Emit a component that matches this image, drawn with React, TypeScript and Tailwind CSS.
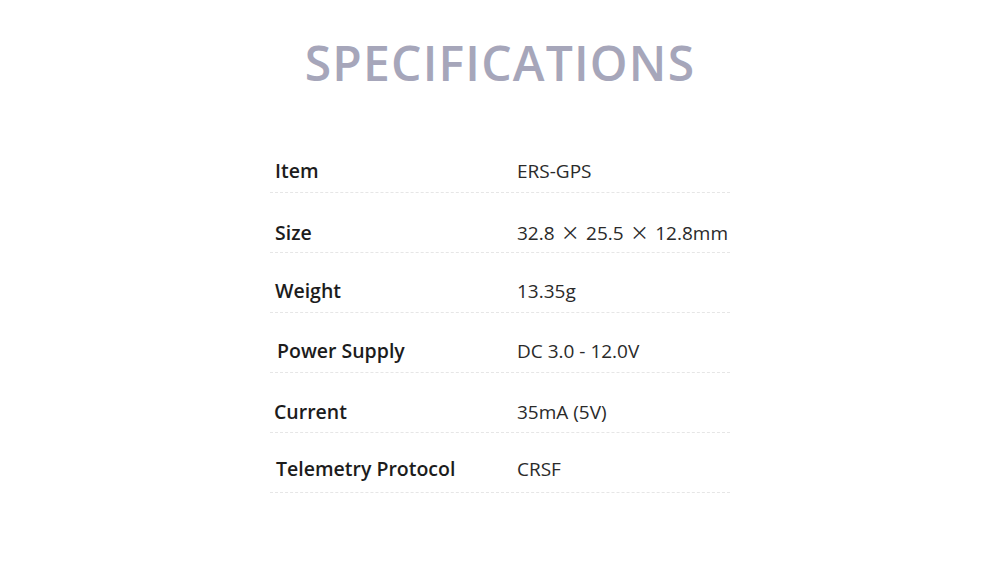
import React from "react";

const specs = [
    {label: "Item", value: ["ERS-GPS"], pl: "pl-[5px]", pb: "pb-[10px]"},
    {label: "Size", value: ["32.8", "25.5", "12.8mm"], pl: "pl-[5px]", pb: "pb-[8px]"},
    {label: "Weight", value: ["13.35g"], pl: "pl-[5px]", pb: "pb-[10px]"},
    {label: "Power Supply", value: ["DC 3.0 - 12.0V"], pl: "pl-[7px]", pb: "pb-[10px]"},
    {label: "Current", value: ["35mA (5V)"], pl: "pl-[4px]", pb: "pb-[9px]"},
    {label: "Telemetry Protocol", value: ["CRSF"], pl: "pl-[6px]", pb: "pb-[12px]"},
];

export default function App() {
    return (
        <div className="w-[1000px] h-[561px] bg-white font-['Open_Sans',sans-serif] overflow-hidden">
            <h1 className="pt-[39px] text-center text-[48px] leading-[48px] font-semibold tracking-[0.025em] text-[#a6a6ba]">
                SPECIFICATIONS
            </h1>

            <div className="w-[460px] mx-auto mt-[46px]">
                {specs.map((row) => (
                    <div
                        key={row.label}
                        className={`flex items-end h-[60px] ${row.pb} border-b border-dashed border-[#e6e6e6]`}
                    >
                        <div className={`w-[247px] shrink-0 ${row.pl} text-[19.5px] leading-[22px] font-semibold text-[#1c1c1c]`}>
                            {row.label}
                        </div>
                        <div className="text-[19px] leading-[22px] text-[#2a2a2a]">
                            {row.value.map((part, i) => (
                                <React.Fragment key={i}>
                                    {i > 0 && (
                                        <span className="px-[2px] font-['Noto_Sans_CJK_SC',sans-serif]"> × </span>
                                    )}
                                    {part}
                                </React.Fragment>
                            ))}
                        </div>
                    </div>
                ))}
            </div>
        </div>
    );
}
